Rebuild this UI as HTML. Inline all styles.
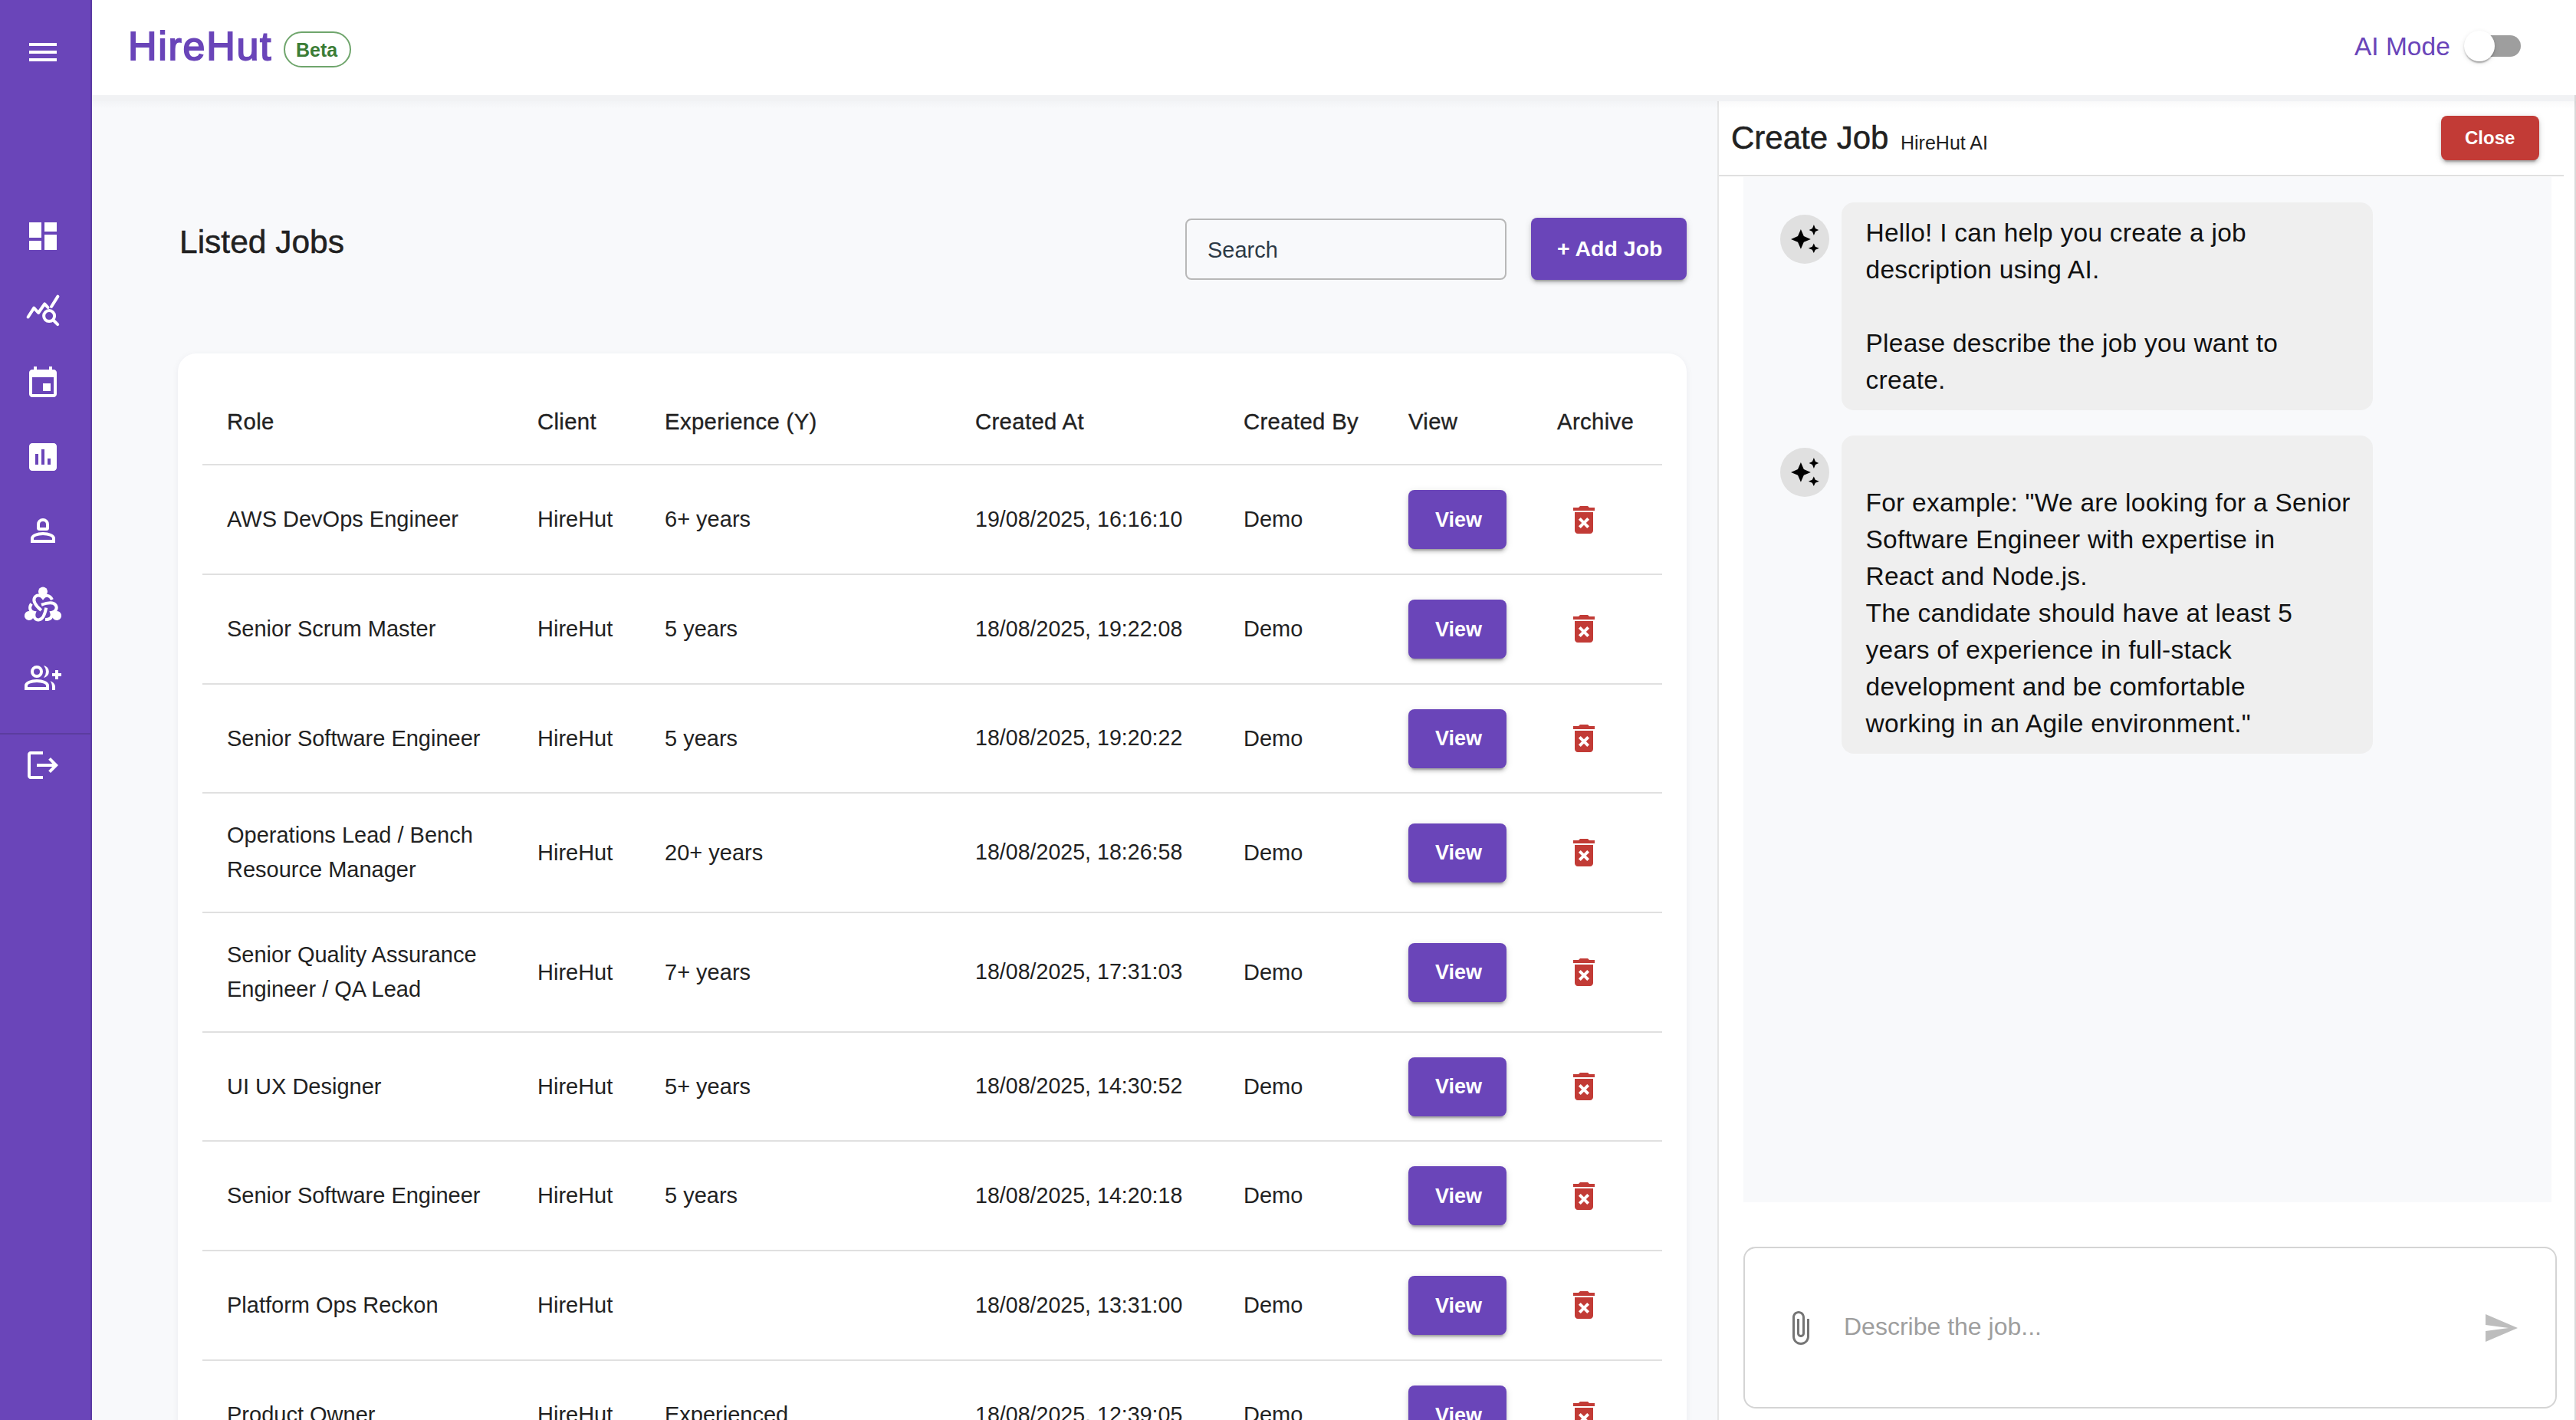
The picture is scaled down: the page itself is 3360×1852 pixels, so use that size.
<!DOCTYPE html>
<html><head><meta charset="utf-8">
<style>
html,body{margin:0;padding:0;}
body{width:3360px;height:1852px;overflow:hidden;position:relative;background:#f8f9fb;font-family:"Liberation Sans",sans-serif;color:#212121;}
.a{position:absolute;white-space:nowrap;}
svg{position:absolute;overflow:visible;}
</style></head>
<body>
<div class="a" style="left:0;top:0;width:118px;height:1852px;background:#6a45b9;border-right:2px solid #5a3aa3;"></div>
<div class="a" style="left:0;top:956px;width:118px;height:2px;background:#5b3d9f;"></div>
<div class="a" style="left:38px;top:56px;width:36px;height:4px;background:#fff;"></div>
<div class="a" style="left:38px;top:66px;width:36px;height:4px;background:#fff;"></div>
<div class="a" style="left:38px;top:76px;width:36px;height:4px;background:#fff;"></div>
<svg style="left:32px;top:284px" width="48" height="48" viewBox="0 0 24 24"><path fill="#fff" d="M3 13h8V3H3zm0 8h8v-6H3zm10 0h8V11h-8zm0-18v6h8V3z"/></svg>
<svg style="left:0;top:0" width="120" height="1000"><g fill="none" stroke="#fff" stroke-width="4" stroke-linecap="round" stroke-linejoin="round"><polyline points="36.6,413.5 44.3,401.7 50.1,408 58.2,396.3 62.5,401"/><line x1="67" y1="400" x2="75.4" y2="386.6"/><circle cx="64.1" cy="412.1" r="7"/><line x1="70" y1="418" x2="75.2" y2="423.2"/></g></svg>
<svg style="left:32px;top:476px" width="48" height="48" viewBox="0 0 24 24"><path fill="#fff" d="M17 12h-5v5h5zM16 1v2H8V1H6v2H5c-1.11 0-1.99.9-1.99 2L3 19c0 1.1.89 2 2 2h14c1.1 0 2-.9 2-2V5c0-1.1-.9-2-2-2h-1V1zm3 18H5V8h14z"/></svg>
<svg style="left:32px;top:572px" width="48" height="48" viewBox="0 0 24 24"><path fill="#fff" d="M19 3H5c-1.1 0-2 .9-2 2v14c0 1.1.9 2 2 2h14c1.1 0 2-.9 2-2V5c0-1.1-.9-2-2-2M9 17H7v-7h2zm4 0h-2V7h2zm4 0h-2v-4h2z"/></svg>
<svg style="left:0;top:0" width="120" height="1000"><g fill="none" stroke="#fff" stroke-width="4"><path stroke-linejoin="round" d="M50,688.5 L50,684 A6,6 0 0 1 62,684 L62,688.5 Q62,690 60.5,690 L51.5,690 Q50,690 50,688.5 Z"/><path d="M42,706 L42,702 A14,6 0 0 1 70,702 L70,706 Z"/></g></svg>
<svg style="left:0;top:0" width="120" height="1000"><defs><g id="arm"><circle cx="56" cy="771.6" r="6" fill="#fff"/><path transform="translate(0 1.6)" d="M68,780.5 C65,774.5 59.5,773.5 56,778 C52.5,773.5 47,774 45,778 C43,782 45,787 53.8,794.5" fill="none" stroke="#fff" stroke-width="4"/></g></defs><use href="#arm"/><use href="#arm" transform="rotate(120 56 792.5)"/><use href="#arm" transform="rotate(240 56 792.5)"/></svg>
<svg style="left:0;top:0" width="120" height="1000"><g fill="none" stroke="#fff" stroke-width="4"><circle cx="48" cy="876" r="6"/><path d="M34,898 L34,894 A14,6 0 0 1 62,894 L62,898 Z"/></g><g fill="#fff"><path d="M57,868 A8.1,8.1 0 0 1 57,884 A12.2,12.2 0 0 0 57,868 Z"/><rect x="72" y="874" width="4" height="12"/><rect x="68" y="878" width="12" height="4"/><path d="M65.5,888 C69.5,890 72,892 72,896 L72,900 L68,900 L68,896 C68,892.5 67,890 65.5,888 Z"/></g></svg>
<svg style="left:32px;top:974px" width="48" height="48" viewBox="0 0 24 24"><path fill="#fff" d="m17 7-1.41 1.41L18.17 11H8v2h10.17l-2.58 2.58L17 17l5-5zM4 5h8V3H4c-1.1 0-2 .9-2 2v14c0 1.1.9 2 2 2h8v-2H4z"/></svg>
<div class="a" style="left:120px;top:0;width:3240px;height:124px;background:#fff;"></div>
<div class="a" style="left:120px;top:124px;width:3240px;height:8px;background:#f1f2f4;z-index:1;"></div>
<div class="a" style="left:120px;top:132px;width:3240px;height:10px;background:linear-gradient(rgba(20,30,60,0.025),rgba(20,30,60,0));z-index:1;"></div>
<div class="a" style="left:120px;top:0;width:3240px;height:124px;z-index:3;">
<div class="a" style="left:47px;top:20.6px;font-size:52px;line-height:78px;color:#6a45b9;font-weight:normal;-webkit-text-stroke:1.8px #6a45b9;letter-spacing:1.7px;">HireHut</div>
<div class="a" style="left:250px;top:41px;width:84px;height:43px;border:2px solid #6fa56c;border-radius:24px;"></div>
<div class="a" style="left:266px;top:45.5px;font-size:25px;line-height:38px;color:#3b7d36;font-weight:bold;">Beta</div>
<div class="a" style="left:2951px;top:35.6px;font-size:33.5px;line-height:50px;color:#6a45b9;font-weight:normal;">AI Mode</div>
<div class="a" style="left:3100px;top:46px;width:68px;height:28px;border-radius:14px;background:#9e9e9e;"></div>
<div class="a" style="left:3094px;top:40px;width:40px;height:40px;border-radius:20px;background:#fff;box-shadow:0 4px 2px -2px rgba(0,0,0,.2),0 2px 2px 0 rgba(0,0,0,.14),0 2px 6px 0 rgba(0,0,0,.12);"></div>
</div>
<div class="a" style="left:234px;top:283.5px;font-size:42.5px;line-height:64px;color:#212121;font-weight:normal;-webkit-text-stroke:0.5px #212121;">Listed Jobs</div>
<div class="a" style="left:1546px;top:285px;width:415px;height:76px;border:2px solid #b8b8b8;border-radius:8px;"></div>
<div class="a" style="left:1575px;top:303.9px;font-size:29px;line-height:44px;color:#2d3a46;font-weight:normal;">Search</div>
<div class="a" style="left:1997px;top:284px;width:203px;height:81px;background:#6a45b9;border-radius:8px;box-shadow:0 6px 2px -4px rgba(0,0,0,.2),0 4px 4px 0 rgba(0,0,0,.14),0 2px 10px 0 rgba(0,0,0,.12);"></div>
<div class="a" style="left:2031px;top:302.9px;font-size:28.5px;line-height:43px;color:#fff;font-weight:bold;">+ Add Job</div>
<div class="a" style="left:232px;top:461px;width:1968px;height:1500px;background:#fff;border-radius:24px;box-shadow:0 2px 10px rgba(20,30,60,0.06);"></div>
<div class="a" style="left:296px;top:527.8px;font-size:29.3px;line-height:44px;color:#222;font-weight:normal;-webkit-text-stroke:0.35px #222;letter-spacing:0.35px;">Role</div>
<div class="a" style="left:701px;top:527.8px;font-size:29.3px;line-height:44px;color:#222;font-weight:normal;-webkit-text-stroke:0.35px #222;letter-spacing:0.35px;">Client</div>
<div class="a" style="left:867px;top:527.8px;font-size:29.3px;line-height:44px;color:#222;font-weight:normal;-webkit-text-stroke:0.35px #222;letter-spacing:0.35px;">Experience (Y)</div>
<div class="a" style="left:1272px;top:527.8px;font-size:29.3px;line-height:44px;color:#222;font-weight:normal;-webkit-text-stroke:0.35px #222;letter-spacing:0.35px;">Created At</div>
<div class="a" style="left:1622px;top:527.8px;font-size:29.3px;line-height:44px;color:#222;font-weight:normal;-webkit-text-stroke:0.35px #222;letter-spacing:0.35px;">Created By</div>
<div class="a" style="left:1837px;top:527.8px;font-size:29.3px;line-height:44px;color:#222;font-weight:normal;-webkit-text-stroke:0.35px #222;letter-spacing:0.35px;">View</div>
<div class="a" style="left:2031px;top:527.8px;font-size:29.3px;line-height:44px;color:#222;font-weight:normal;-webkit-text-stroke:0.35px #222;letter-spacing:0.35px;">Archive</div>
<div class="a" style="left:264px;top:605px;width:1904px;height:2px;background:#e0e0e0;"></div>
<div class="a" style="left:264px;top:748px;width:1904px;height:2px;background:#e0e0e0;"></div>
<div class="a" style="left:264px;top:891px;width:1904px;height:2px;background:#e0e0e0;"></div>
<div class="a" style="left:264px;top:1033px;width:1904px;height:2px;background:#e0e0e0;"></div>
<div class="a" style="left:264px;top:1189px;width:1904px;height:2px;background:#e0e0e0;"></div>
<div class="a" style="left:264px;top:1345px;width:1904px;height:2px;background:#e0e0e0;"></div>
<div class="a" style="left:264px;top:1487px;width:1904px;height:2px;background:#e0e0e0;"></div>
<div class="a" style="left:264px;top:1630px;width:1904px;height:2px;background:#e0e0e0;"></div>
<div class="a" style="left:264px;top:1773px;width:1904px;height:2px;background:#e0e0e0;"></div>
<div class="a" style="left:296px;top:655.0px;font-size:29px;line-height:44px;color:#222;font-weight:normal;">AWS DevOps Engineer</div>
<div class="a" style="left:701px;top:655.0px;font-size:29px;line-height:44px;color:#222;font-weight:normal;">HireHut</div>
<div class="a" style="left:867px;top:655.0px;font-size:29px;line-height:44px;color:#222;font-weight:normal;">6+ years</div>
<div class="a" style="left:1272px;top:655.5px;font-size:28.6px;line-height:43px;color:#222;font-weight:normal;">19/08/2025, 16:16:10</div>
<div class="a" style="left:1622px;top:655.0px;font-size:29px;line-height:44px;color:#222;font-weight:normal;">Demo</div>
<div class="a" style="left:1837px;top:639.0px;width:128px;height:77px;background:#6a45b9;border-radius:8px;box-shadow:0 6px 2px -4px rgba(0,0,0,.2),0 4px 4px 0 rgba(0,0,0,.14),0 2px 10px 0 rgba(0,0,0,.12);"></div>
<div class="a" style="left:1872px;top:657.5px;font-size:27px;line-height:40px;color:#fff;font-weight:bold;">View</div>
<svg style="left:2042px;top:654px" width="48" height="48" viewBox="0 0 24 24"><path fill="#c23b36" d="M6 19c0 1.1.9 2 2 2h8c1.1 0 2-.9 2-2V7H6zm2.46-7.12 1.41-1.41L12 12.59l2.12-2.12 1.41 1.41L13.41 14l2.12 2.12-1.41 1.41L12 15.41l-2.12 2.12-1.41-1.41L10.59 14zM15.5 4l-1-1h-5l-1 1H5v2h14V4z"/></svg>
<div class="a" style="left:296px;top:798.0px;font-size:29px;line-height:44px;color:#222;font-weight:normal;">Senior Scrum Master</div>
<div class="a" style="left:701px;top:798.0px;font-size:29px;line-height:44px;color:#222;font-weight:normal;">HireHut</div>
<div class="a" style="left:867px;top:798.0px;font-size:29px;line-height:44px;color:#222;font-weight:normal;">5 years</div>
<div class="a" style="left:1272px;top:798.5px;font-size:28.6px;line-height:43px;color:#222;font-weight:normal;">18/08/2025, 19:22:08</div>
<div class="a" style="left:1622px;top:798.0px;font-size:29px;line-height:44px;color:#222;font-weight:normal;">Demo</div>
<div class="a" style="left:1837px;top:782.0px;width:128px;height:77px;background:#6a45b9;border-radius:8px;box-shadow:0 6px 2px -4px rgba(0,0,0,.2),0 4px 4px 0 rgba(0,0,0,.14),0 2px 10px 0 rgba(0,0,0,.12);"></div>
<div class="a" style="left:1872px;top:800.5px;font-size:27px;line-height:40px;color:#fff;font-weight:bold;">View</div>
<svg style="left:2042px;top:796px" width="48" height="48" viewBox="0 0 24 24"><path fill="#c23b36" d="M6 19c0 1.1.9 2 2 2h8c1.1 0 2-.9 2-2V7H6zm2.46-7.12 1.41-1.41L12 12.59l2.12-2.12 1.41 1.41L13.41 14l2.12 2.12-1.41 1.41L12 15.41l-2.12 2.12-1.41-1.41L10.59 14zM15.5 4l-1-1h-5l-1 1H5v2h14V4z"/></svg>
<div class="a" style="left:296px;top:940.5px;font-size:29px;line-height:44px;color:#222;font-weight:normal;">Senior Software Engineer</div>
<div class="a" style="left:701px;top:940.5px;font-size:29px;line-height:44px;color:#222;font-weight:normal;">HireHut</div>
<div class="a" style="left:867px;top:940.5px;font-size:29px;line-height:44px;color:#222;font-weight:normal;">5 years</div>
<div class="a" style="left:1272px;top:941.0px;font-size:28.6px;line-height:43px;color:#222;font-weight:normal;">18/08/2025, 19:20:22</div>
<div class="a" style="left:1622px;top:940.5px;font-size:29px;line-height:44px;color:#222;font-weight:normal;">Demo</div>
<div class="a" style="left:1837px;top:924.5px;width:128px;height:77px;background:#6a45b9;border-radius:8px;box-shadow:0 6px 2px -4px rgba(0,0,0,.2),0 4px 4px 0 rgba(0,0,0,.14),0 2px 10px 0 rgba(0,0,0,.12);"></div>
<div class="a" style="left:1872px;top:943.0px;font-size:27px;line-height:40px;color:#fff;font-weight:bold;">View</div>
<svg style="left:2042px;top:939px" width="48" height="48" viewBox="0 0 24 24"><path fill="#c23b36" d="M6 19c0 1.1.9 2 2 2h8c1.1 0 2-.9 2-2V7H6zm2.46-7.12 1.41-1.41L12 12.59l2.12-2.12 1.41 1.41L13.41 14l2.12 2.12-1.41 1.41L12 15.41l-2.12 2.12-1.41-1.41L10.59 14zM15.5 4l-1-1h-5l-1 1H5v2h14V4z"/></svg>
<div class="a" style="left:296px;top:1067.2px;font-size:29px;line-height:44px;color:#222;font-weight:normal;">Operations Lead / Bench</div>
<div class="a" style="left:296px;top:1112.0px;font-size:29px;line-height:44px;color:#222;font-weight:normal;">Resource Manager</div>
<div class="a" style="left:701px;top:1089.5px;font-size:29px;line-height:44px;color:#222;font-weight:normal;">HireHut</div>
<div class="a" style="left:867px;top:1089.5px;font-size:29px;line-height:44px;color:#222;font-weight:normal;">20+ years</div>
<div class="a" style="left:1272px;top:1090.0px;font-size:28.6px;line-height:43px;color:#222;font-weight:normal;">18/08/2025, 18:26:58</div>
<div class="a" style="left:1622px;top:1089.5px;font-size:29px;line-height:44px;color:#222;font-weight:normal;">Demo</div>
<div class="a" style="left:1837px;top:1073.5px;width:128px;height:77px;background:#6a45b9;border-radius:8px;box-shadow:0 6px 2px -4px rgba(0,0,0,.2),0 4px 4px 0 rgba(0,0,0,.14),0 2px 10px 0 rgba(0,0,0,.12);"></div>
<div class="a" style="left:1872px;top:1092.0px;font-size:27px;line-height:40px;color:#fff;font-weight:bold;">View</div>
<svg style="left:2042px;top:1088px" width="48" height="48" viewBox="0 0 24 24"><path fill="#c23b36" d="M6 19c0 1.1.9 2 2 2h8c1.1 0 2-.9 2-2V7H6zm2.46-7.12 1.41-1.41L12 12.59l2.12-2.12 1.41 1.41L13.41 14l2.12 2.12-1.41 1.41L12 15.41l-2.12 2.12-1.41-1.41L10.59 14zM15.5 4l-1-1h-5l-1 1H5v2h14V4z"/></svg>
<div class="a" style="left:296px;top:1223.2px;font-size:29px;line-height:44px;color:#222;font-weight:normal;">Senior Quality Assurance</div>
<div class="a" style="left:296px;top:1268.0px;font-size:29px;line-height:44px;color:#222;font-weight:normal;">Engineer / QA Lead</div>
<div class="a" style="left:701px;top:1245.5px;font-size:29px;line-height:44px;color:#222;font-weight:normal;">HireHut</div>
<div class="a" style="left:867px;top:1245.5px;font-size:29px;line-height:44px;color:#222;font-weight:normal;">7+ years</div>
<div class="a" style="left:1272px;top:1246.0px;font-size:28.6px;line-height:43px;color:#222;font-weight:normal;">18/08/2025, 17:31:03</div>
<div class="a" style="left:1622px;top:1245.5px;font-size:29px;line-height:44px;color:#222;font-weight:normal;">Demo</div>
<div class="a" style="left:1837px;top:1229.5px;width:128px;height:77px;background:#6a45b9;border-radius:8px;box-shadow:0 6px 2px -4px rgba(0,0,0,.2),0 4px 4px 0 rgba(0,0,0,.14),0 2px 10px 0 rgba(0,0,0,.12);"></div>
<div class="a" style="left:1872px;top:1248.0px;font-size:27px;line-height:40px;color:#fff;font-weight:bold;">View</div>
<svg style="left:2042px;top:1244px" width="48" height="48" viewBox="0 0 24 24"><path fill="#c23b36" d="M6 19c0 1.1.9 2 2 2h8c1.1 0 2-.9 2-2V7H6zm2.46-7.12 1.41-1.41L12 12.59l2.12-2.12 1.41 1.41L13.41 14l2.12 2.12-1.41 1.41L12 15.41l-2.12 2.12-1.41-1.41L10.59 14zM15.5 4l-1-1h-5l-1 1H5v2h14V4z"/></svg>
<div class="a" style="left:296px;top:1394.5px;font-size:29px;line-height:44px;color:#222;font-weight:normal;">UI UX Designer</div>
<div class="a" style="left:701px;top:1394.5px;font-size:29px;line-height:44px;color:#222;font-weight:normal;">HireHut</div>
<div class="a" style="left:867px;top:1394.5px;font-size:29px;line-height:44px;color:#222;font-weight:normal;">5+ years</div>
<div class="a" style="left:1272px;top:1395.0px;font-size:28.6px;line-height:43px;color:#222;font-weight:normal;">18/08/2025, 14:30:52</div>
<div class="a" style="left:1622px;top:1394.5px;font-size:29px;line-height:44px;color:#222;font-weight:normal;">Demo</div>
<div class="a" style="left:1837px;top:1378.5px;width:128px;height:77px;background:#6a45b9;border-radius:8px;box-shadow:0 6px 2px -4px rgba(0,0,0,.2),0 4px 4px 0 rgba(0,0,0,.14),0 2px 10px 0 rgba(0,0,0,.12);"></div>
<div class="a" style="left:1872px;top:1397.0px;font-size:27px;line-height:40px;color:#fff;font-weight:bold;">View</div>
<svg style="left:2042px;top:1393px" width="48" height="48" viewBox="0 0 24 24"><path fill="#c23b36" d="M6 19c0 1.1.9 2 2 2h8c1.1 0 2-.9 2-2V7H6zm2.46-7.12 1.41-1.41L12 12.59l2.12-2.12 1.41 1.41L13.41 14l2.12 2.12-1.41 1.41L12 15.41l-2.12 2.12-1.41-1.41L10.59 14zM15.5 4l-1-1h-5l-1 1H5v2h14V4z"/></svg>
<div class="a" style="left:296px;top:1537.0px;font-size:29px;line-height:44px;color:#222;font-weight:normal;">Senior Software Engineer</div>
<div class="a" style="left:701px;top:1537.0px;font-size:29px;line-height:44px;color:#222;font-weight:normal;">HireHut</div>
<div class="a" style="left:867px;top:1537.0px;font-size:29px;line-height:44px;color:#222;font-weight:normal;">5 years</div>
<div class="a" style="left:1272px;top:1537.5px;font-size:28.6px;line-height:43px;color:#222;font-weight:normal;">18/08/2025, 14:20:18</div>
<div class="a" style="left:1622px;top:1537.0px;font-size:29px;line-height:44px;color:#222;font-weight:normal;">Demo</div>
<div class="a" style="left:1837px;top:1521.0px;width:128px;height:77px;background:#6a45b9;border-radius:8px;box-shadow:0 6px 2px -4px rgba(0,0,0,.2),0 4px 4px 0 rgba(0,0,0,.14),0 2px 10px 0 rgba(0,0,0,.12);"></div>
<div class="a" style="left:1872px;top:1539.5px;font-size:27px;line-height:40px;color:#fff;font-weight:bold;">View</div>
<svg style="left:2042px;top:1536px" width="48" height="48" viewBox="0 0 24 24"><path fill="#c23b36" d="M6 19c0 1.1.9 2 2 2h8c1.1 0 2-.9 2-2V7H6zm2.46-7.12 1.41-1.41L12 12.59l2.12-2.12 1.41 1.41L13.41 14l2.12 2.12-1.41 1.41L12 15.41l-2.12 2.12-1.41-1.41L10.59 14zM15.5 4l-1-1h-5l-1 1H5v2h14V4z"/></svg>
<div class="a" style="left:296px;top:1680.0px;font-size:29px;line-height:44px;color:#222;font-weight:normal;">Platform Ops Reckon</div>
<div class="a" style="left:701px;top:1680.0px;font-size:29px;line-height:44px;color:#222;font-weight:normal;">HireHut</div>
<div class="a" style="left:1272px;top:1680.5px;font-size:28.6px;line-height:43px;color:#222;font-weight:normal;">18/08/2025, 13:31:00</div>
<div class="a" style="left:1622px;top:1680.0px;font-size:29px;line-height:44px;color:#222;font-weight:normal;">Demo</div>
<div class="a" style="left:1837px;top:1664.0px;width:128px;height:77px;background:#6a45b9;border-radius:8px;box-shadow:0 6px 2px -4px rgba(0,0,0,.2),0 4px 4px 0 rgba(0,0,0,.14),0 2px 10px 0 rgba(0,0,0,.12);"></div>
<div class="a" style="left:1872px;top:1682.5px;font-size:27px;line-height:40px;color:#fff;font-weight:bold;">View</div>
<svg style="left:2042px;top:1678px" width="48" height="48" viewBox="0 0 24 24"><path fill="#c23b36" d="M6 19c0 1.1.9 2 2 2h8c1.1 0 2-.9 2-2V7H6zm2.46-7.12 1.41-1.41L12 12.59l2.12-2.12 1.41 1.41L13.41 14l2.12 2.12-1.41 1.41L12 15.41l-2.12 2.12-1.41-1.41L10.59 14zM15.5 4l-1-1h-5l-1 1H5v2h14V4z"/></svg>
<div class="a" style="left:296px;top:1823.0px;font-size:29px;line-height:44px;color:#222;font-weight:normal;">Product Owner</div>
<div class="a" style="left:701px;top:1823.0px;font-size:29px;line-height:44px;color:#222;font-weight:normal;">HireHut</div>
<div class="a" style="left:867px;top:1823.0px;font-size:29px;line-height:44px;color:#222;font-weight:normal;">Experienced</div>
<div class="a" style="left:1272px;top:1823.5px;font-size:28.6px;line-height:43px;color:#222;font-weight:normal;">18/08/2025, 12:39:05</div>
<div class="a" style="left:1622px;top:1823.0px;font-size:29px;line-height:44px;color:#222;font-weight:normal;">Demo</div>
<div class="a" style="left:1837px;top:1807.0px;width:128px;height:77px;background:#6a45b9;border-radius:8px;box-shadow:0 6px 2px -4px rgba(0,0,0,.2),0 4px 4px 0 rgba(0,0,0,.14),0 2px 10px 0 rgba(0,0,0,.12);"></div>
<div class="a" style="left:1872px;top:1825.5px;font-size:27px;line-height:40px;color:#fff;font-weight:bold;">View</div>
<svg style="left:2042px;top:1822px" width="48" height="48" viewBox="0 0 24 24"><path fill="#c23b36" d="M6 19c0 1.1.9 2 2 2h8c1.1 0 2-.9 2-2V7H6zm2.46-7.12 1.41-1.41L12 12.59l2.12-2.12 1.41 1.41L13.41 14l2.12 2.12-1.41 1.41L12 15.41l-2.12 2.12-1.41-1.41L10.59 14zM15.5 4l-1-1h-5l-1 1H5v2h14V4z"/></svg>
<div class="a" style="left:2240px;top:132px;width:1116px;height:1720px;background:#fff;border-left:2px solid #e6e6e6;border-right:2px solid #d9d9d9;"></div>
<div class="a" style="left:2258px;top:148.4px;font-size:42px;line-height:63px;color:#212121;font-weight:normal;-webkit-text-stroke:0.5px #212121;">Create Job</div>
<div class="a" style="left:2479px;top:166.7px;font-size:25px;line-height:38px;color:#212121;font-weight:normal;">HireHut AI</div>
<div class="a" style="left:3184px;top:151px;width:128px;height:58px;background:#c23b36;border-radius:8px;box-shadow:0 6px 2px -4px rgba(0,0,0,.2),0 4px 4px 0 rgba(0,0,0,.14),0 2px 10px 0 rgba(0,0,0,.12);"></div>
<div class="a" style="left:3215px;top:161.6px;font-size:24px;line-height:36px;color:#fff;font-weight:bold;">Close</div>
<div class="a" style="left:3358px;top:124px;width:2px;height:8px;background:#d9d9d9;z-index:2;"></div>
<div class="a" style="left:2242px;top:228px;width:1102px;height:2px;background:#e0e0e0;"></div>
<div class="a" style="left:2274px;top:231px;width:1054px;height:1337px;background:#f8f9fb;"></div>
<div class="a" style="left:2322px;top:280px;width:64px;height:64px;border-radius:32px;background:#e0e0e0;"></div>
<svg style="left:0;top:0" width="3360" height="1852"><path fill="#000" d="M2348.9,299.04999999999995 L2352.8,308.0 L2361.75,311.9 L2352.8,315.79999999999995 L2348.9,324.75 L2345.0,315.79999999999995 L2336.05,311.9 L2345.0,308.0 Z M2365.9,293.1 L2367.9,298.1 L2372.2000000000003,300.1 L2367.9,302.1 L2365.9,307.1 L2363.9,302.1 L2359.6,300.1 L2363.9,298.1 Z M2365.8,317.4 L2367.8,321.7 L2372.8,323.7 L2367.8,325.7 L2365.8,330.0 L2363.8,325.7 L2358.8,323.7 L2363.8,321.7 Z"/></svg>
<div class="a" style="left:2402px;top:264px;width:693px;height:271px;background:#efefef;border-radius:16px;"></div>
<div class="a" style="left:2433.5px;top:279.0px;font-size:33.5px;line-height:50px;color:#111;font-weight:normal;letter-spacing:0.25px;">Hello! I can help you create a job</div>
<div class="a" style="left:2433.5px;top:327.0px;font-size:33.5px;line-height:50px;color:#111;font-weight:normal;letter-spacing:0.25px;">description using AI.</div>
<div class="a" style="left:2433.5px;top:423.0px;font-size:33.5px;line-height:50px;color:#111;font-weight:normal;letter-spacing:0.25px;">Please describe the job you want to</div>
<div class="a" style="left:2433.5px;top:471.0px;font-size:33.5px;line-height:50px;color:#111;font-weight:normal;letter-spacing:0.25px;">create.</div>
<div class="a" style="left:2322px;top:584px;width:64px;height:64px;border-radius:32px;background:#e0e0e0;"></div>
<svg style="left:0;top:0" width="3360" height="1852"><path fill="#000" d="M2348.9,603.05 L2352.8,612.0 L2361.75,615.9 L2352.8,619.8 L2348.9,628.75 L2345.0,619.8 L2336.05,615.9 L2345.0,612.0 Z M2365.9,597.1 L2367.9,602.1 L2372.2000000000003,604.1 L2367.9,606.1 L2365.9,611.1 L2363.9,606.1 L2359.6,604.1 L2363.9,602.1 Z M2365.8,621.4000000000001 L2367.8,625.7 L2372.8,627.7 L2367.8,629.7 L2365.8,634.0 L2363.8,629.7 L2358.8,627.7 L2363.8,625.7 Z"/></svg>
<div class="a" style="left:2402px;top:568px;width:693px;height:415px;background:#efefef;border-radius:16px;"></div>
<div class="a" style="left:2433.5px;top:631.1px;font-size:33.5px;line-height:50px;color:#111;font-weight:normal;letter-spacing:0.25px;">For example: "We are looking for a Senior</div>
<div class="a" style="left:2433.5px;top:679.1px;font-size:33.5px;line-height:50px;color:#111;font-weight:normal;letter-spacing:0.25px;">Software Engineer with expertise in</div>
<div class="a" style="left:2433.5px;top:727.1px;font-size:33.5px;line-height:50px;color:#111;font-weight:normal;letter-spacing:0.25px;">React and Node.js.</div>
<div class="a" style="left:2433.5px;top:775.1px;font-size:33.5px;line-height:50px;color:#111;font-weight:normal;letter-spacing:0.25px;">The candidate should have at least 5</div>
<div class="a" style="left:2433.5px;top:823.1px;font-size:33.5px;line-height:50px;color:#111;font-weight:normal;letter-spacing:0.25px;">years of experience in full-stack</div>
<div class="a" style="left:2433.5px;top:871.1px;font-size:33.5px;line-height:50px;color:#111;font-weight:normal;letter-spacing:0.25px;">development and be comfortable</div>
<div class="a" style="left:2433.5px;top:919.1px;font-size:33.5px;line-height:50px;color:#111;font-weight:normal;letter-spacing:0.25px;">working in an Agile environment."</div>
<div class="a" style="left:2274px;top:1626px;width:1057px;height:207px;background:#fff;border:2px solid #d4d4d4;border-radius:16px;"></div>
<svg style="left:2324px;top:1708px" width="48" height="48" viewBox="0 0 24 24"><path fill="#757575" d="M16.5 6v11.5c0 2.21-1.79 4-4 4s-4-1.79-4-4V5c0-1.38 1.12-2.5 2.5-2.5s2.5 1.12 2.5 2.5v10.5c0 .55-.45 1-1 1s-1-.45-1-1V6H10v9.5c0 1.38 1.12 2.5 2.5 2.5s2.5-1.12 2.5-2.5V5c0-2.21-1.79-4-4-4S7 2.79 7 5v12.5c0 3.04 2.46 5.5 5.5 5.5s5.5-2.46 5.5-5.5V6z"/></svg>
<div class="a" style="left:2405px;top:1705.9px;font-size:32px;line-height:48px;color:#9e9e9e;font-weight:normal;">Describe the job...</div>
<svg style="left:3238px;top:1708px" width="48" height="48" viewBox="0 0 24 24"><path fill="#bdbdbd" d="M2.01 21 23 12 2.01 3 2 10l15 2-15 2z"/></svg>
</body></html>
